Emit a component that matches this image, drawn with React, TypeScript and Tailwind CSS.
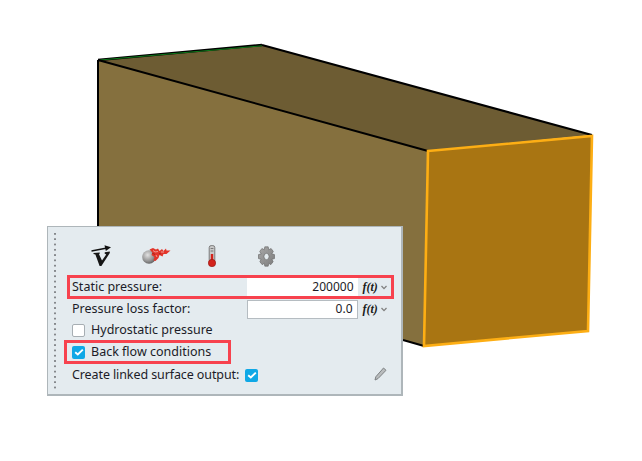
import React from "react";

function Check({ size = 15 }: { size?: number }) {
  return (
    <div className="flex items-center justify-center rounded-[2px] bg-[#0fa8e6] shrink-0" style={{ width: size, height: size }}>
      <svg width="10" height="8" viewBox="0 0 10 8">
        <path d="M1.2 4.2 L3.8 6.4 L8.8 1.6" fill="none" stroke="#fff" strokeWidth="1.9" />
      </svg>
    </div>
  );
}

function Scene() {
  return (
    <svg className="absolute inset-0" width="642" height="461" viewBox="0 0 642 461">
      <polygon points="98,60 428,151 424,346 98,257" fill="#85703e" />
      <polygon points="98,60 262,45 592,135 428,151" fill="#6d5c33" />
      <polygon points="428,151 592,136 588,331 424,346" fill="#a97512" />
      <path d="M98,60 L262,45" stroke="#000" strokeWidth="2.4" fill="none" />
      <path d="M100,60 L262,45.8" stroke="#0d7a1a" strokeWidth="1" fill="none" />
      <path d="M98,60 L98,240 M98,60 L428,151 M262,45 L592,135 M403,340 L424,346" stroke="#000" strokeWidth="2" fill="none" />
      <polygon points="428,151 592,136 588,331 424,346" fill="none" stroke="#fdae14" strokeWidth="2.6" />
    </svg>
  );
}

function NablaIcon() {
  return (
    <svg width="22" height="22" viewBox="0 0 22 22">
      <path d="M0.5 6 L16 3" stroke="#111" strokeWidth="1.3" />
      <path d="M13.5 0.3 L20 2.3 L14.8 6 Z" fill="#111" />
      <path d="M2.5 8 L8.8 7.6 L8.6 8.8 L8 9.2 L11 15.6 L15.2 9.4 L13.6 8.6 L13.8 7.2 L18.8 6.6 L18.8 8 L10.4 21 L8.6 21 L4.4 9.6 L2.5 9 Z" fill="#161616" />
    </svg>
  );
}

function SphereIcon() {
  return (
    <svg width="30" height="20" viewBox="0 0 30 20">
      <defs>
        <radialGradient id="ball" cx="0.4" cy="0.35" r="0.75">
          <stop offset="0" stopColor="#e2e2e2" />
          <stop offset="0.6" stopColor="#949494" />
          <stop offset="1" stopColor="#505050" />
        </radialGradient>
      </defs>
      <circle cx="7" cy="12" r="6.8" fill="url(#ball)" />
      <path d="M7.5 4.5 L11 3 L14 4.5 L16 3.5 L17.5 6 L20 4 L21.5 6 L24 3.5 L24.5 5.5 L28.5 5.5 L24.5 9 L21.5 9 L20.5 11.5 L17.5 10 L16.5 13 L13.5 16 L11.5 15.5 L12.5 12 L9.5 10 L10.5 7.5 Z" fill="#e2352a" />
      <path d="M11 5.5 L13 7 L16 6.5 M14 10 L15 12 M19 7 L22 7" stroke="#f2a6a0" strokeWidth="0.9" fill="none" />
      <path d="M10 8 L13 9.5 M17 8.5 L19 9" stroke="#9c1e16" strokeWidth="0.8" fill="none" />
    </svg>
  );
}

function ThermoIcon() {
  return (
    <svg width="8" height="22" viewBox="0 0 8 22">
      <rect x="1.2" y="0.6" width="5.6" height="16" rx="2" fill="#c9c9c9" stroke="#7a7a7a" strokeWidth="1" />
      <rect x="2.8" y="9" width="2.4" height="9" fill="#d3231c" />
      <path d="M2.6 3.5 H5.4 M2.6 6 H5.4" stroke="#666" strokeWidth="0.8" />
      <circle cx="4" cy="18" r="3.7" fill="#d3231c" stroke="#8e1812" strokeWidth="0.6" />
    </svg>
  );
}

function GearIcon() {
  return (
    <svg width="17" height="21" viewBox="0 0 20 20" preserveAspectRatio="none">
      <defs>
        <linearGradient id="gear" x1="0" y1="0" x2="1" y2="1">
          <stop offset="0" stopColor="#a8a8a8" />
          <stop offset="1" stopColor="#7d7d7d" />
        </linearGradient>
      </defs>
      <path
        fillRule="evenodd"
        d="M8 0.8 L12 0.8 L12.6 3.6 L15.4 2.4 L18 5.2 L16.2 7.6 L19.4 8.2 L19.4 12 L16.4 12.6 L17.8 15 L15 17.8 L12.6 16.4 L12 19.2 L8 19.2 L7.4 16.4 L5 17.8 L2.2 15 L3.6 12.6 L0.6 12 L0.6 8.2 L3.8 7.6 L2 5.2 L4.6 2.4 L7.4 3.6 Z M10 7 A3 3 0 1 0 10 13 A3 3 0 1 0 10 7 Z"
        fill="url(#gear)"
        stroke="#6a6a6a"
        strokeWidth="0.7"
      />
    </svg>
  );
}

function Fx() {
  return (
    <div className="flex items-center ml-[5px] gap-[3px]">
      <span className="text-[12px] italic font-bold text-[#1a1a1a] [font-family:'Liberation_Serif',serif]">f(t)</span>
      <svg width="6" height="5" viewBox="0 0 6 5">
        <path d="M0.5 1 L3 3.6 L5.5 1" fill="none" stroke="#808080" strokeWidth="1.3" />
      </svg>
    </div>
  );
}

function FieldRow({ label, value, boxed }: { label: string; value: string; boxed?: boolean }) {
  return (
    <div className="flex items-center h-[20px] pl-[24px]">
      <div className="w-[174.5px] shrink-0 truncate">{label}</div>
      <div className={`w-[111px] h-[19px] bg-white flex items-center justify-end pr-[4px] text-[12px] ${boxed ? "" : "border border-[#b5bcc1]"}`}>
        {value}
      </div>
      <Fx />
    </div>
  );
}

export default function App() {
  return (
    <div className="relative w-[642px] h-[461px] bg-white overflow-hidden [font-family:'Noto_Sans',Arial,sans-serif]">
      <Scene />
      <div className="absolute left-[47px] top-[226px] w-[356px] h-[170px] bg-[#e4ebef] border border-[#aeb6ba] border-b-2 border-r-2 text-[12.5px] text-[#1c1c28] flex flex-col">
        <div className="absolute left-[6px] top-[6px] bottom-[5px] w-[2px] bg-[linear-gradient(#85888c_2px,transparent_2px)] bg-[length:2px_5.3px]" />
        <div className="h-[49px] relative flex items-end">
          <div className="absolute left-[43px] top-[18px]"><NablaIcon /></div>
          <div className="absolute left-[94px] top-[18px]"><SphereIcon /></div>
          <div className="absolute left-[160px] top-[18px]"><ThermoIcon /></div>
          <div className="absolute left-[210px] top-[19px]"><GearIcon /></div>
          <div className="ml-[25px] w-[40px] h-[2px] rounded-full bg-linear-to-r from-[#a8d8f0] via-[#1aa3e8] to-[#cfe6f2] mb-[-1px]" />
        </div>
        <div className="mt-[1px]">
          <FieldRow label="Static pressure:" value="200000" boxed />
        </div>
        <div className="mt-[2px]">
          <FieldRow label="Pressure loss factor:" value="0.0" />
        </div>
        <div className="flex items-center h-[20px] pl-[24px] gap-[6px] mt-[1px]">
          <div className="w-[13px] h-[13px] bg-white border border-[#a7aeb3] rounded-[2px] shrink-0" />
          <span>Hydrostatic pressure</span>
        </div>
        <div className="flex items-center h-[20px] pl-[24px] gap-[6px] mt-[2px]">
          <Check size={13} />
          <span>Back flow conditions</span>
        </div>
        <div className="flex items-center h-[20px] pl-[24px] mt-[3px] relative">
          <span className="tracking-[-0.1px]">Create linked surface output:</span>
          <div className="ml-[6px]"><Check size={13} /></div>
          <svg className="absolute right-[14px] top-[2px]" width="13" height="14" viewBox="0 0 13 14">
            <path d="M9.5 1 L12 3.3 L4 11.6 L1 13 L1.8 9.8 Z" fill="#b9bcbd" stroke="#7d8183" strokeWidth="1" />
          </svg>
        </div>
        <div className="absolute left-[19px] top-[48px] w-[327px] h-[24px] border-[3px] border-[#f7424e]" />
        <div className="absolute left-[16px] top-[113px] w-[167px] h-[24px] border-[3px] border-[#f7424e]" />
      </div>
    </div>
  );
}
